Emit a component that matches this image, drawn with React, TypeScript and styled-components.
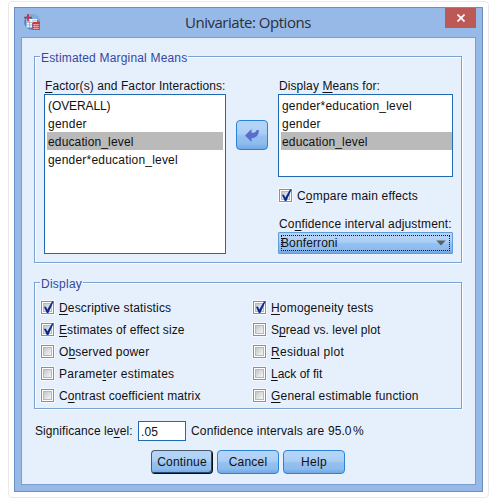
import React from 'react';
import styled, { createGlobalStyle, css } from 'styled-components';

const GlobalStyle = createGlobalStyle`
  * { box-sizing: border-box; }
  body {
    margin: 0;
    background: #fff;
    color: #111;
    font: 12px/14px "Liberation Sans", Arial, sans-serif;
    overflow: hidden;
  }
`;

const Page = styled.div`
  width: 492px;
  height: 500px;
  padding: 1px 0 0 8px;
`;

const Card = styled.div`
  width: 481px;
  height: 497px;
  padding: 5px;
  border: 1px solid #e9e9e9;
  border-radius: 4px;
`;

const Dialog = styled.div`
  width: 469px;
  height: 485px;
  display: flex;
  flex-direction: column;
  background: #97b9e7;
  border: 1px solid #6b8fbf;
`;

const TitleBar = styled.header`
  height: 29px;
  flex: none;
  display: grid;
  grid-template-columns: 31px 1fr 31px;
  padding: 0 6px 0 9px;
`;

const AppIcon = styled.svg`
  width: 16px;
  height: 16px;
  margin-top: 6px;
`;

const Title = styled.h1`
  margin: 0;
  padding: 4px 0 0 130px;
  font: 400 15px/20px "Open Sans", "Noto Sans", sans-serif;
  letter-spacing: -0.48px;
  color: #2a3038;
`;

const CloseButton = styled.button`
  width: 31px;
  height: 20px;
  padding: 0;
  border: 0;
  background: #bc5955;
  display: grid;
  place-items: center;
`;

const Body = styled.main`
  width: 455px;
  height: 448px;
  margin-left: 6px;
  padding: 18px 12px 0;
  background: #e6f0fd;
  border: 1px solid #7b9fcd;
`;

const Group = styled.section<{ $height: number }>`
  width: 428px;
  height: ${(p) => p.$height}px;
  margin-bottom: 19px;
  padding: 0 8px 0 6px;
  border: 1px solid #7ba3d2;
  box-shadow: 1px 1px 0 #fbfdff, inset 1px 1px 0 #fbfdff;
`;

const Legend = styled.h2`
  width: max-content;
  height: 14px;
  margin: -7px 0 0 -1px;
  padding: 0 1px;
  position: relative;
  top: 1px;
  background: #e6f0fd;
  color: #37479c;
  font: inherit;
`;

const Text = styled.span<{ $track?: number }>`
  white-space: pre;
  letter-spacing: ${(p) => p.$track ?? 0.16}px;
`;

const Key = styled.span`
  text-decoration: underline;
  text-decoration-thickness: 1px;
  text-underline-offset: 2px;
  text-decoration-skip-ink: none;
`;

const Columns = styled.div`
  display: grid;
  grid-template-columns: 182px 52px 175px;
  padding: 15px 0 0 3px;
`;

const Column = styled.div`
  display: flex;
  flex-direction: column;
`;

const FieldLabel = styled.label`
  height: 15px;
  padding-left: 1px;
`;

const List = styled.ul<{ $height: number; $right: number }>`
  height: ${(p) => p.$height}px;
  margin: 0;
  padding: 1px ${(p) => p.$right}px 0 2px;
  list-style: none;
  background: #fff;
  border: 1px solid #1f6ab2;
`;

const Item = styled.li<{ $selected?: boolean }>`
  height: 18px;
  padding: 1px 0 0 1px;
  line-height: 18px;
  background: ${(p) => (p.$selected ? '#bababa' : 'transparent')};
`;

const glossy = css`
  background: linear-gradient(#b4d4f7 0, #b4d4f7 20%, #a9cdf5 45%, #94c0f0 55%, #8fbcee 80%, #70a7e4 100%);
  border: 1px solid #2b82d9;
  color: #111;
`;

const ArrowButton = styled.button`
  ${glossy}
  width: 32px;
  height: 30px;
  margin: 41px 0 0 10px;
  padding: 0;
  border-radius: 4px;
  display: grid;
  place-items: center;
`;

const CheckRow = styled.label`
  height: 22px;
  display: flex;
  align-items: flex-start;
  gap: 5px;
`;

const Box = styled.span`
  width: 13px;
  height: 13px;
  flex: none;
  border: 1px solid #8d8f92;
  background: linear-gradient(135deg, #c4c7cb, #f4f5f6) content-box, #fafafa;
  padding: 2px;
  box-shadow: 0 0 0 1px #f6faff, inset 0 0 0 1px #fff, inset 0 0 0 2px #b6b9bc;
  display: grid;
`;

const Tick = styled.svg`
  width: 13px;
  height: 13px;
  margin: -3px 0 0 -3px;
`;

const CompareRow = styled.div`
  height: 40px;
  padding: 12px 0 0 1px;
`;

const Combo = styled.div`
  ${glossy}
  height: 22px;
  padding: 2px;
  border-color: #5d9ddd;
  border-radius: 1px;
`;

const ComboFocus = styled.div`
  height: 16px;
  padding-right: 4px;
  outline: 1px dotted #111;
  outline-offset: -1px;
  display: flex;
  align-items: center;
  justify-content: space-between;
`;

const Checks = styled.div`
  display: grid;
  grid-template-columns: 212px 1fr;
  padding-top: 11px;
`;

const Significance = styled.div`
  height: 20px;
  margin-top: -7px;
  padding-left: 1px;
  display: flex;
  align-items: center;
`;

const SignificanceLabel = styled.label`
  width: 98px;
`;

const Input = styled.span`
  width: 48px;
  height: 20px;
  margin: 0 5px;
  padding-left: 2px;
  line-height: 20px;
  background: #fff;
  border: 1px solid #1f6ab2;
`;

const IntervalCaption = styled.span`
  width: 137px;
`;

const IntervalValue = styled.span`
  width: 25px;
`;

const Buttons = styled.div`
  display: flex;
  gap: 4px;
  margin-top: 9px;
  padding-left: 117px;
`;

const Button = styled.button<{ $primary?: boolean }>`
  ${glossy}
  width: 62px;
  height: 24px;
  padding: 0 0 1px;
  border-radius: 4px;
  font: inherit;
  ${(p) =>
    p.$primary &&
    css`
      border-color: #4c5a69 #0a0d12 #0a0d12 #4c5a69;
      box-shadow: inset -1px -1px 0 #24486f;
    `}
`;

type CheckProps = { label: string; keyAt: number; track?: number; checked?: boolean };

/** Renders a label with the mnemonic character at `at` underlined. */
function Mnemonic({ text, at, track }: { text: string; at: number; track?: number }) {
  return (
    <Text $track={track}>
      {text.slice(0, at)}
      <Key>{text[at]}</Key>
      {text.slice(at + 1)}
    </Text>
  );
}

function Check({ label, keyAt, track, checked }: CheckProps) {
  return (
    <CheckRow>
      <Box>
        {checked && (
          <Tick viewBox="0 0 13 13">
            <path d="M2.900 5.800 L5 5.800 L6.300 8.500 L11 .6 L12.600 .6 L7.400 12 L5.800 12 Z" fill="#0c2a8c" />
          </Tick>
        )}
      </Box>
      <Mnemonic text={label} at={keyAt} track={track} />
    </CheckRow>
  );
}

const leftChecks: CheckProps[] = [
  { label: 'Descriptive statistics', keyAt: 0, checked: true },
  { label: 'Estimates of effect size', keyAt: 0, track: 0.1, checked: true },
  { label: 'Observed power', keyAt: 1 },
  { label: 'Parameter estimates', keyAt: 6, track: 0.24 },
  { label: 'Contrast coefficient matrix', keyAt: 1, track: 0.11 },
];

const rightChecks: CheckProps[] = [
  { label: 'Homogeneity tests', keyAt: 0, track: 0.18, checked: true },
  { label: 'Spread vs. level plot', keyAt: 1, track: 0.06 },
  { label: 'Residual plot', keyAt: 0, track: 0.28 },
  { label: 'Lack of fit', keyAt: 0, track: 0 },
  { label: 'General estimable function', keyAt: 0, track: 0.19 },
];

export default function App() {
  return (
    <Page>
      <GlobalStyle />
      <Card>
        <Dialog>
          <TitleBar>
            <AppIcon viewBox="0 0 16 16">
              <circle cx="8" cy="8" r="7.8" fill="#4f83bd" />
              <path d="M3 1.8A7.8 7.8 0 0 1 15.6 7L9 5Z" fill="#82add8" />
              <path d="M2.500 5H13V9H8v4.500H2.500Z" fill="#eef4fa" />
              <path d="M2.500 8.500H8M2.500 11H8M5.500 6V13.500M8 6.800h5" stroke="#7396bd" strokeWidth=".6" />
              <path d="M4 0v7.500M0 3.500h8" stroke="#c9303a" strokeWidth="1.700" />
              <path d="M8.500 8H16V16H8.500Z" fill="#cc3944" />
              <path d="M9 10.500h6.500M9 12.500h6.500M9 14.500h6.500M10.800 10v5.500M13 10v5.500" stroke="#f1c4ca" strokeWidth=".6" />
            </AppIcon>
            <Title>Univariate: Options</Title>
            <CloseButton aria-label="Close">
              <svg width="8" height="8" viewBox="0 0 8 8">
                <path d="M.5 .5 7.500 7.500M7.500 .5 .5 7.500" stroke="#fff" strokeWidth="1.700" />
              </svg>
            </CloseButton>
          </TitleBar>
          <Body>
            <Group $height={207}>
              <Legend><Text $track={0.18}>Estimated Marginal Means</Text></Legend>
              <Columns>
                <Column>
                  <FieldLabel><Mnemonic text="Factor(s) and Factor Interactions:" at={0} track={0.09} /></FieldLabel>
                  <List $height={160} $right={2}>
                    <Item><Text $track={-0.1}>(OVERALL)</Text></Item>
                    <Item><Text $track={0.25}>gender</Text></Item>
                    <Item $selected><Text $track={0.14}>education_level</Text></Item>
                    <Item><Text $track={0.2}>gender*education_level</Text></Item>
                  </List>
                </Column>
                <ArrowButton aria-label="Move back">
                  <svg width="16" height="16" viewBox="0 0 16 16">
                    <path d="M1 8.500 7.500 2v3.800c2.500.3 4.500-.6 5.300-2.800h2c.3 5-2.500 7.800-7.300 8.200V15Z" fill="#5c6ccb" />
                  </svg>
                </ArrowButton>
                <Column>
                  <FieldLabel><Mnemonic text="Display Means for:" at={8} track={0.09} /></FieldLabel>
                  <List $height={83} $right={0}>
                    <Item><Text $track={0.2}>gender*education_level</Text></Item>
                    <Item><Text $track={0.25}>gender</Text></Item>
                    <Item $selected><Text $track={0.14}>education_level</Text></Item>
                  </List>
                  <CompareRow>
                    <Check label="Compare main effects" keyAt={1} track={0.19} checked />
                  </CompareRow>
                  <FieldLabel><Mnemonic text="Confidence interval adjustment:" at={2} track={0.15} /></FieldLabel>
                  <Combo>
                    <ComboFocus>
                      <Text $track={0.12}>Bonferroni</Text>
                      <svg width="10" height="6" viewBox="0 0 10 6">
                        <path d="M.3 .5H9.700L5 5.500Z" fill="#5d6064" />
                      </svg>
                    </ComboFocus>
                  </Combo>
                </Column>
              </Columns>
            </Group>
            <Group $height={127}>
              <Legend><Text $track={0.25}>Display</Text></Legend>
              <Checks>
                <div>{leftChecks.map((c) => <Check key={c.label} {...c} />)}</div>
                <div>{rightChecks.map((c) => <Check key={c.label} {...c} />)}</div>
              </Checks>
            </Group>
            <Significance>
              <SignificanceLabel><Mnemonic text="Significance level:" at={15} track={0.08} /></SignificanceLabel>
              <Input><Text $track={0.1}>.05</Text></Input>
              <IntervalCaption><Text>Confidence intervals are</Text></IntervalCaption>
              <IntervalValue><Text $track={0.05}>95.0</Text></IntervalValue>
              <Text>%</Text>
            </Significance>
            <Buttons>
              <Button $primary><Text $track={0.2}>Continue</Text></Button>
              <Button><Text $track={0.2}>Cancel</Text></Button>
              <Button><Text $track={0.35}>Help</Text></Button>
            </Buttons>
          </Body>
        </Dialog>
      </Card>
    </Page>
  );
}
